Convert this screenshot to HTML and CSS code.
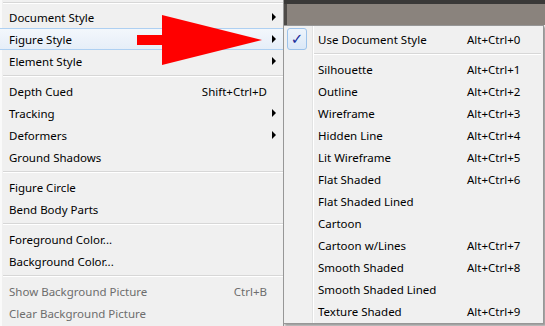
FILE: index.html
```html
<!DOCTYPE html>
<html lang="en">

<head>
    <meta charset="UTF-8">
    <title>Figure Style</title>
    <link rel="stylesheet" href="styles.css">
</head>

<body>
    <div class="screen">
        <!-- Главное меню -->
        <div class="menu main-menu">
            <div class="sep sep-top"></div>
            <div class="item"><span class="label">Document Style</span><span class="key"></span><span class="arrow"></span></div>
            <div class="item active"><span class="label">Figure Style</span><span class="key"></span><span class="arrow"></span></div>
            <div class="item"><span class="label">Element Style</span><span class="key"></span><span class="arrow"></span></div>
            <div class="sep"></div>
            <div class="item"><span class="label">Depth Cued</span><span class="key">Shift+Ctrl+D</span><span></span></div>
            <div class="item"><span class="label">Tracking</span><span class="key"></span><span class="arrow"></span></div>
            <div class="item"><span class="label">Deformers</span><span class="key"></span><span class="arrow"></span></div>
            <div class="item"><span class="label">Ground Shadows</span><span class="key"></span><span></span></div>
            <div class="sep"></div>
            <div class="item"><span class="label">Figure Circle</span><span class="key"></span><span></span></div>
            <div class="item"><span class="label">Bend Body Parts</span><span class="key"></span><span></span></div>
            <div class="sep"></div>
            <div class="item"><span class="label">Foreground Color...</span><span class="key"></span><span></span></div>
            <div class="item"><span class="label">Background Color...</span><span class="key"></span><span></span></div>
            <div class="sep"></div>
            <div class="item disabled"><span class="label">Show Background Picture</span><span class="key">Ctrl+B</span><span></span></div>
            <div class="item disabled"><span class="label">Clear Background Picture</span><span class="key"></span><span></span></div>
        </div>

        <div class="side">
            <div class="backdrop"></div>

            <!-- Подменю Figure Style -->
            <div class="menu submenu">
                <div class="sub-item"><span class="gutter"><span class="check">&#10003;</span></span><span class="label">Use Document Style</span><span class="key">Alt+Ctrl+0</span></div>
                <div class="sep"></div>
                <div class="sub-item"><span class="gutter"></span><span class="label">Silhouette</span><span class="key">Alt+Ctrl+1</span></div>
                <div class="sub-item"><span class="gutter"></span><span class="label">Outline</span><span class="key">Alt+Ctrl+2</span></div>
                <div class="sub-item"><span class="gutter"></span><span class="label">Wireframe</span><span class="key">Alt+Ctrl+3</span></div>
                <div class="sub-item"><span class="gutter"></span><span class="label">Hidden Line</span><span class="key">Alt+Ctrl+4</span></div>
                <div class="sub-item"><span class="gutter"></span><span class="label">Lit Wireframe</span><span class="key">Alt+Ctrl+5</span></div>
                <div class="sub-item"><span class="gutter"></span><span class="label">Flat Shaded</span><span class="key">Alt+Ctrl+6</span></div>
                <div class="sub-item"><span class="gutter"></span><span class="label">Flat Shaded Lined</span><span class="key"></span></div>
                <div class="sub-item"><span class="gutter"></span><span class="label">Cartoon</span><span class="key"></span></div>
                <div class="sub-item"><span class="gutter"></span><span class="label">Cartoon w/Lines</span><span class="key">Alt+Ctrl+7</span></div>
                <div class="sub-item"><span class="gutter"></span><span class="label">Smooth Shaded</span><span class="key">Alt+Ctrl+8</span></div>
                <div class="sub-item"><span class="gutter"></span><span class="label">Smooth Shaded Lined</span><span class="key"></span></div>
                <div class="sub-item"><span class="gutter"></span><span class="label">Texture Shaded</span><span class="key">Alt+Ctrl+9</span></div>
            </div>
        </div>

        <!-- Красная стрелка поверх меню -->
        <svg class="pointer" width="545" height="326" viewBox="0 0 545 326">
            <polygon points="137,35 162,35 162,15 262,40 162,65 162,45 137,45" fill="#ff0000" />
        </svg>
    </div>
</body>

</html>
```

FILE: styles.css
```css
/* Основа */
body {
    margin: 0;
    font-family: 'Noto Sans', 'Open Sans', sans-serif;
    font-size: 11.5px;
    color: #000000;
    background: #f0f0f0;
}

.screen {
    position: relative;
    display: flex;
    width: 545px;
    height: 326px;
    overflow: hidden;
}

.menu {
    background-color: #f0f0f0;
}

/* Главное меню */
.main-menu {
    width: 283px;
    border-right: 1px solid #979797;
    box-shadow: inset 2px 0 0 #fafafa;
}

.item {
    display: grid;
    grid-template-columns: 1fr auto 16px;
    align-items: center;
    height: 22px;
    padding-left: 9px;
    box-sizing: border-box;
    white-space: nowrap;
}

.item.active {
    border-top: 1px solid #aed0f2;
    border-bottom: 1px solid #aed0f2;
    background: linear-gradient(#f3f7fc, #e6eef8);
}

.item.disabled {
    color: #6d6d6d;
}

.arrow {
    width: 0;
    height: 0;
    margin-left: 5px;
    border-left: 4px solid #000000;
    border-top: 4px solid transparent;
    border-bottom: 4px solid transparent;
}

/* Разделители */
.sep {
    height: 8px;
    padding-top: 3px;
    margin-left: 3px;
    box-sizing: border-box;
}

.sep::before {
    content: "";
    display: block;
    height: 1px;
    background: #d7d7d7;
    border-bottom: 1px solid #ffffff;
}

.sep-top {
    height: 6px;
    padding-top: 2px;
}

/* Правая часть */
.side {
    display: flex;
    flex-direction: column;
    flex: 1;
}

.backdrop {
    height: 21px;
    background-color: #8a837d;
    border-top: 4px solid #3a3938;
    box-shadow: inset 3px 0 0 #4d4a47;
}

/* Подменю */
.submenu {
    width: 259px;
    margin-left: -1px;
    padding: 2px 0 1px;
    border: 1px solid #979797;
    box-shadow: 2px 2px 2px rgba(0, 0, 0, 0.35);
    background: linear-gradient(to right, transparent 28px, #e2e3e3 28px, #e2e3e3 29px, #ffffff 29px, #ffffff 30px, transparent 30px), #f0f0f0;
}

.sub-item {
    display: grid;
    grid-template-columns: 34px 149px auto;
    align-items: center;
    height: 22px;
    white-space: nowrap;
}

.gutter {
    display: flex;
    height: 22px;
}

.check {
    display: flex;
    align-items: center;
    justify-content: center;
    width: 18px;
    height: 20px;
    margin-left: 3px;
    border: 1px solid #9cc2ea;
    border-radius: 3px;
    background: linear-gradient(#eef4fb, #dbe8f7);
    color: #1b2c9a;
    font-size: 15px;
    font-weight: bold;
    font-family: 'DejaVu Sans', sans-serif;
}

.submenu .sep {
    margin-left: 30px;
    margin-right: 2px;
}

/* Стрелка-указатель */
.pointer {
    position: absolute;
    top: 0;
    left: 0;
    pointer-events: none;
}
```
